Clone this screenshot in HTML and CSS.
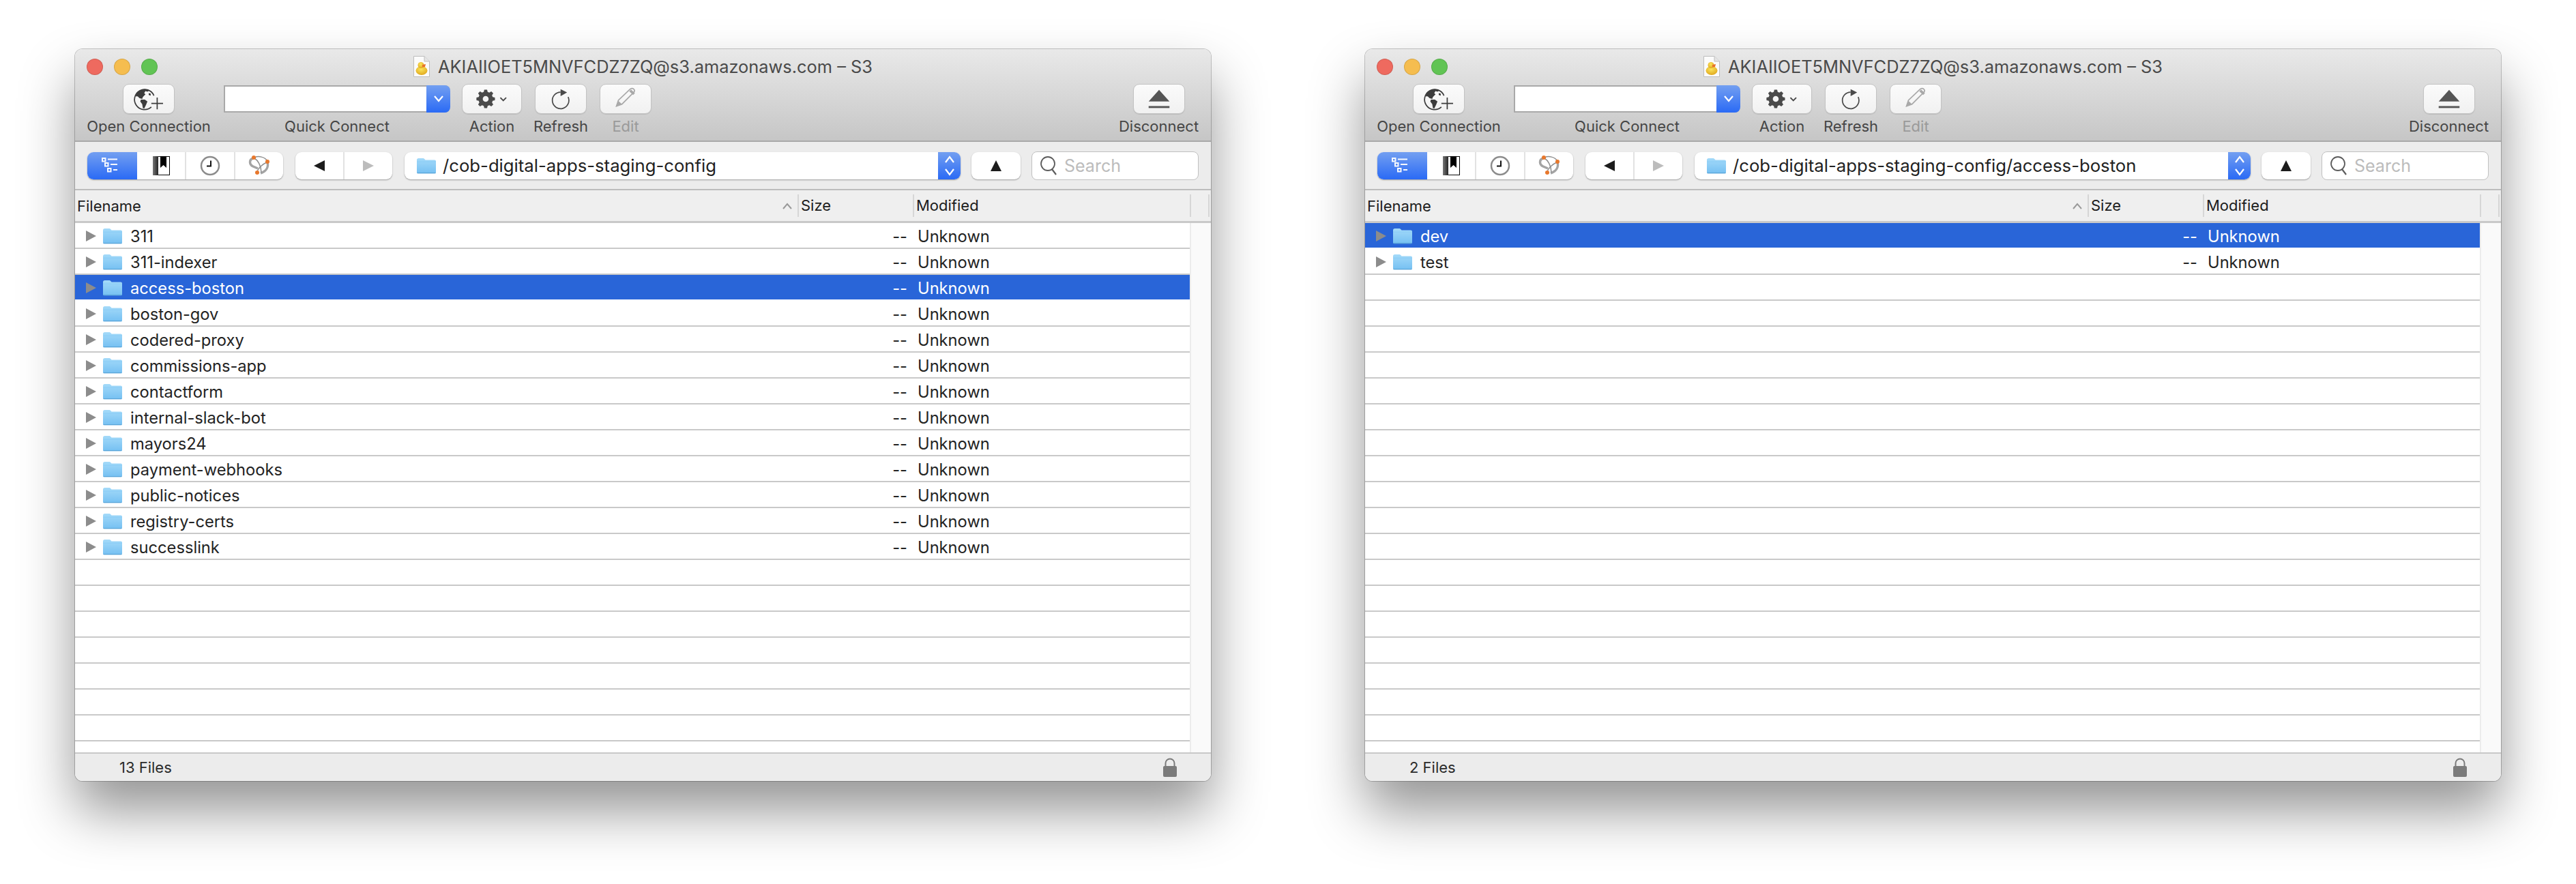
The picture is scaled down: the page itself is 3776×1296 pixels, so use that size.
FILE: index.html
```html
<html>
	<head>
		<meta charset="utf-8">
		<title>Cyberduck S3 browser</title>
		<link rel="stylesheet" href="styles.css">
	</head>
	<body>
		<svg class="sprite">
			<defs>
				<linearGradient id="folderFill" x1="0" y1="0" x2="0" y2="1">
					<stop offset="0" stop-color="#a4daf9"/>
					<stop offset="1" stop-color="#75c0f2"/>
				</linearGradient>
				<linearGradient id="spineFill" x1="0" y1="0" x2="1" y2="0">
					<stop offset="0" stop-color="#777"/>
					<stop offset="0.4" stop-color="#111"/>
					<stop offset="1" stop-color="#000"/>
				</linearGradient>
				<radialGradient id="duckFill" cx="0.45" cy="0.35" r="0.7">
					<stop offset="0" stop-color="#fbe55a"/>
					<stop offset="1" stop-color="#dfa51c"/>
				</radialGradient>
				<symbol id="folder" viewBox="0 0 30 24">
					<path d="M1 3.500C1 2 2 1 3.500 1H10c1 0 1.600.4 2.200 1.100L13.500 3.500H27c1.200 0 2 .8 2 2V21.500c0 1-.8 1.700-1.800 1.700H2.800C1.800 23.200 1 22.500 1 21.500Z" fill="url(#folderFill)"/>
					<path d="M1 6.200H29" stroke="#8ccdf6" stroke-width="1" fill="none"/>
					<path d="M1.500 22.600H28.500" stroke="#5aa5d8" stroke-width="1.200" fill="none"/>
				</symbol>
				<symbol id="globe" viewBox="0 0 76 44">
					<path d="M42 34.500A15.500 15.500 0 1 1 46 17" fill="none" stroke="#3c3c3c" stroke-width="1.800"/>
					<path d="M19 13c3-4 8-6 13-6 3 0 6 1 7 2l-3 2-3-1-2 3 2 2-4 4-1 3-4-1-3-3-3 0Z" fill="#3c3c3c"/>
					<path d="M26 23l6 0 4 3-2 5-3 6-2-1-1-6-3-4Z" fill="#3c3c3c"/>
					<path d="M38 13l3 1 0 3-3-1Z" fill="#3c3c3c"/>
					<path d="M51 20V38M42 29H60" fill="none" stroke="#3c3c3c" stroke-width="1.800"/>
				</symbol>
				<symbol id="gear" viewBox="0 0 88 44">
					<path d="M32 8h5l1 4 3 1.200 3.500-2.200 3.500 3.500-2.200 3.500L47 21l4 1v5l-4 1-1.200 3 2.200 3.500-3.500 3.500-3.500-2.200L38 37l-1 4h-5l-1-4-3-1.200-3.500 2.200-3.500-3.500 2.200-3.500L22 28l-4-1v-5l4-1 1.200-3-2.200-3.500 3.500-3.500 3.500 2.200L31 12Z" transform="translate(34.500 22) scale(.86) translate(-34.500 -24.500)" fill="#4a4a4a"/>
					<circle cx="34.500" cy="22" r="4.500" fill="#f4f4f4"/>
					<path d="M57 20l4.500 4.500L66 20" fill="none" stroke="#4a4a4a" stroke-width="2"/>
				</symbol>
				<symbol id="refresh" viewBox="0 0 76 44">
					<path d="M37.700 11.600A12.700 12.700 0 1 0 49.300 19" fill="none" stroke="#4a4a4a" stroke-width="1.800"/>
					<path d="M37.700 7L47.700 12 37.700 17.700Z" fill="#4a4a4a"/>
				</symbol>
				<symbol id="pencil" viewBox="0 0 76 44">
					<path d="M24 33l3-9 18-17c2-1.500 4-1.500 5.500 0s1.500 3.500 0 5L32.500 30Z" fill="none" stroke="#a9a9a9" stroke-width="1.800"/>
					<path d="M45 9l6 5.500" stroke="#a9a9a9" stroke-width="4" fill="none"/>
					<path d="M23 34l3.500-9.500 6 5.500Z" fill="#a9a9a9"/>
				</symbol>
				<symbol id="eject" viewBox="0 0 76 44">
					<path d="M38 8L54 26H22Z" fill="#555"/>
					<rect x="22" y="33" width="32" height="3" fill="#555"/>
				</symbol>
				<symbol id="outline" viewBox="0 0 73 40">
					<g fill="none" stroke="#fff" stroke-width="2" opacity=".95">
						<rect x="22" y="9" width="4.500" height="4.500"/>
						<rect x="26" y="16" width="4.500" height="4.500"/>
						<rect x="30" y="24" width="4.500" height="4.500"/>
						<path d="M30 10.500H44M34 18H44M38 26H44"/>
					</g>
				</symbol>
				<symbol id="bookmark" viewBox="0 0 25 28">
					<rect width="25" height="28" fill="url(#spineFill)"/>
					<rect x="8" y="1" width="16" height="26" fill="#fff"/>
					<path d="M11 0H20V17L15.500 13 11 17Z" fill="#000"/>
				</symbol>
				<symbol id="clock" viewBox="0 0 30 30">
					<circle cx="15" cy="15" r="13" fill="#fff" stroke="#8c8c8c" stroke-width="2.500"/>
					<path d="M16 7.500V15.500H10" fill="none" stroke="#111" stroke-width="2"/>
				</symbol>
				<symbol id="bonjour" viewBox="0 0 32 32">
					<g fill="none" stroke="#a4a4a4" stroke-width="3.500">
						<path d="M7 5C1 7 1 14 7 17L14 20"/>
						<path d="M28 11C30 18 26 24 18 27"/>
					</g>
					<g fill="none" stroke="#8e8e8e" stroke-width="1.500">
						<path d="M9 4C15 1 24 3 28 9"/>
						<path d="M27 11C20 14 14 20 13 25"/>
						<path d="M9 5C14 8 19 16 19 26"/>
					</g>
					<circle cx="8" cy="4" r="3" fill="#e8782c"/>
					<circle cx="28" cy="10" r="3" fill="#e8782c"/>
					<circle cx="13" cy="26" r="3" fill="#e8782c"/>
				</symbol>
				<symbol id="duckfile" viewBox="0 0 24 31">
					<path d="M.5.500H16L23.500 8V30.500H.5Z" fill="#fbfbfb" stroke="#bdbdbd"/>
					<path d="M16 .5V8H23.500" fill="#e4e4e4" stroke="#bdbdbd"/>
					<ellipse cx="12" cy="21.500" rx="8.500" ry="6.500" fill="url(#duckFill)"/>
					<circle cx="11" cy="13.500" r="4.500" fill="url(#duckFill)"/>
					<path d="M13 13l5-1-1 4-4 .5Z" fill="#e8702a"/>
				</symbol>
				<symbol id="magnifier" viewBox="0 0 26 30">
					<circle cx="12" cy="12" r="10" fill="none" stroke="#5c5c5c" stroke-width="1.800"/>
					<path d="M18 20l6 8" stroke="#5c5c5c" stroke-width="2.200" fill="none"/>
				</symbol>
				<symbol id="lock" viewBox="0 0 20 28">
					<path d="M3.500 13V8a6.500 6.500 0 0 1 13 0V13" fill="none" stroke="#7b7b7b" stroke-width="2"/>
					<rect y="12" width="20" height="16" rx="2" fill="#7b7b7b"/>
				</symbol>
			</defs>
		</svg>

		<div class="window">
			<div class="titlebar">
				<div class="title-row">
					<div class="lights">
						<span class="light red"></span>
						<span class="light yellow"></span>
						<span class="light green"></span>
					</div>
					<div class="title">
						<svg class="title-icon"><use href="#duckfile"/></svg>
						<span>AKIAIIOET5MNVFCDZ7ZQ@s3.amazonaws.com – S3</span>
					</div>
				</div>
				<div class="toolbar">
					<div class="tool tool-open">
						<div class="tool-btn"><svg class="btn-icon"><use href="#globe"/></svg></div>
						<span class="tool-label">Open Connection</span>
					</div>
					<div class="tool tool-quick">
						<div class="quick-box"><span class="quick-arrow"><svg viewBox="0 0 16 12"><path d="M2 2l6 7 6-7" fill="none" stroke="#fff" stroke-width="2.200"/></svg></span></div>
						<span class="tool-label">Quick Connect</span>
					</div>
					<div class="tool tool-action">
						<div class="tool-btn wide"><svg class="btn-icon"><use href="#gear"/></svg></div>
						<span class="tool-label">Action</span>
					</div>
					<div class="tool tool-refresh">
						<div class="tool-btn"><svg class="btn-icon"><use href="#refresh"/></svg></div>
						<span class="tool-label">Refresh</span>
					</div>
					<div class="tool tool-edit">
						<div class="tool-btn"><svg class="btn-icon"><use href="#pencil"/></svg></div>
						<span class="tool-label disabled">Edit</span>
					</div>
					<div class="tool tool-disconnect">
						<div class="tool-btn"><svg class="btn-icon"><use href="#eject"/></svg></div>
						<span class="tool-label">Disconnect</span>
					</div>
				</div>
			</div>
			<div class="navbar">
				<div class="segments">
					<div class="seg seg-on"><svg class="seg-outline"><use href="#outline"/></svg></div>
					<div class="seg"><svg class="seg-bookmark"><use href="#bookmark"/></svg></div>
					<div class="seg"><svg class="seg-clock"><use href="#clock"/></svg></div>
					<div class="seg"><svg class="seg-bonjour"><use href="#bonjour"/></svg></div>
				</div>
				<div class="history">
					<div class="hist"><span class="arrow-left"></span></div>
					<div class="hist"><span class="arrow-right"></span></div>
				</div>
				<div class="path">
					<svg class="path-folder"><use href="#folder"/></svg>
					<span class="path-text">/cob-digital-apps-staging-config</span>
					<span class="path-arrows"><svg viewBox="0 0 16 36"><path d="M2 13l6-8 6 8M2 23l6 8 6-8" fill="none" stroke="#fff" stroke-width="2.200"/></svg></span>
				</div>
				<div class="up-btn"><span class="arrow-up"></span></div>
				<div class="search">
					<svg class="search-icon"><use href="#magnifier"/></svg>
					<span class="search-text">Search</span>
				</div>
			</div>
			<div class="list-header">
				<div class="col-name">Filename<span class="sort-mark"><svg viewBox="0 0 14 10"><path d="M1 9l6-7 6 7" fill="none" stroke="#999" stroke-width="2"/></svg></span></div>
				<div class="col-size">Size</div>
				<div class="col-mod">Modified</div>
				<div class="col-rest"></div>
			</div>
			<div class="list">
				<div class="rows">
					<div class="row"><span class="tri"></span><svg class="row-folder"><use href="#folder"/></svg><span class="row-name">311</span><span class="row-size">--</span><span class="row-mod">Unknown</span></div>
					<div class="row"><span class="tri"></span><svg class="row-folder"><use href="#folder"/></svg><span class="row-name">311-indexer</span><span class="row-size">--</span><span class="row-mod">Unknown</span></div>
					<div class="row selected"><span class="tri"></span><svg class="row-folder"><use href="#folder"/></svg><span class="row-name">access-boston</span><span class="row-size">--</span><span class="row-mod">Unknown</span></div>
					<div class="row"><span class="tri"></span><svg class="row-folder"><use href="#folder"/></svg><span class="row-name">boston-gov</span><span class="row-size">--</span><span class="row-mod">Unknown</span></div>
					<div class="row"><span class="tri"></span><svg class="row-folder"><use href="#folder"/></svg><span class="row-name">codered-proxy</span><span class="row-size">--</span><span class="row-mod">Unknown</span></div>
					<div class="row"><span class="tri"></span><svg class="row-folder"><use href="#folder"/></svg><span class="row-name">commissions-app</span><span class="row-size">--</span><span class="row-mod">Unknown</span></div>
					<div class="row"><span class="tri"></span><svg class="row-folder"><use href="#folder"/></svg><span class="row-name">contactform</span><span class="row-size">--</span><span class="row-mod">Unknown</span></div>
					<div class="row"><span class="tri"></span><svg class="row-folder"><use href="#folder"/></svg><span class="row-name">internal-slack-bot</span><span class="row-size">--</span><span class="row-mod">Unknown</span></div>
					<div class="row"><span class="tri"></span><svg class="row-folder"><use href="#folder"/></svg><span class="row-name">mayors24</span><span class="row-size">--</span><span class="row-mod">Unknown</span></div>
					<div class="row"><span class="tri"></span><svg class="row-folder"><use href="#folder"/></svg><span class="row-name">payment-webhooks</span><span class="row-size">--</span><span class="row-mod">Unknown</span></div>
					<div class="row"><span class="tri"></span><svg class="row-folder"><use href="#folder"/></svg><span class="row-name">public-notices</span><span class="row-size">--</span><span class="row-mod">Unknown</span></div>
					<div class="row"><span class="tri"></span><svg class="row-folder"><use href="#folder"/></svg><span class="row-name">registry-certs</span><span class="row-size">--</span><span class="row-mod">Unknown</span></div>
					<div class="row"><span class="tri"></span><svg class="row-folder"><use href="#folder"/></svg><span class="row-name">successlink</span><span class="row-size">--</span><span class="row-mod">Unknown</span></div>
					<div class="row"></div><div class="row"></div><div class="row"></div><div class="row"></div>
					<div class="row"></div><div class="row"></div><div class="row"></div><div class="row"></div>
				</div>
				<div class="scroll-track"></div>
			</div>
			<div class="statusbar">
				<span class="status-text">13 Files</span>
				<svg class="status-lock"><use href="#lock"/></svg>
			</div>
		</div>

		<div class="window">
			<div class="titlebar">
				<div class="title-row">
					<div class="lights">
						<span class="light red"></span>
						<span class="light yellow"></span>
						<span class="light green"></span>
					</div>
					<div class="title">
						<svg class="title-icon"><use href="#duckfile"/></svg>
						<span>AKIAIIOET5MNVFCDZ7ZQ@s3.amazonaws.com – S3</span>
					</div>
				</div>
				<div class="toolbar">
					<div class="tool tool-open">
						<div class="tool-btn"><svg class="btn-icon"><use href="#globe"/></svg></div>
						<span class="tool-label">Open Connection</span>
					</div>
					<div class="tool tool-quick">
						<div class="quick-box"><span class="quick-arrow"><svg viewBox="0 0 16 12"><path d="M2 2l6 7 6-7" fill="none" stroke="#fff" stroke-width="2.200"/></svg></span></div>
						<span class="tool-label">Quick Connect</span>
					</div>
					<div class="tool tool-action">
						<div class="tool-btn wide"><svg class="btn-icon"><use href="#gear"/></svg></div>
						<span class="tool-label">Action</span>
					</div>
					<div class="tool tool-refresh">
						<div class="tool-btn"><svg class="btn-icon"><use href="#refresh"/></svg></div>
						<span class="tool-label">Refresh</span>
					</div>
					<div class="tool tool-edit">
						<div class="tool-btn"><svg class="btn-icon"><use href="#pencil"/></svg></div>
						<span class="tool-label disabled">Edit</span>
					</div>
					<div class="tool tool-disconnect">
						<div class="tool-btn"><svg class="btn-icon"><use href="#eject"/></svg></div>
						<span class="tool-label">Disconnect</span>
					</div>
				</div>
			</div>
			<div class="navbar">
				<div class="segments">
					<div class="seg seg-on"><svg class="seg-outline"><use href="#outline"/></svg></div>
					<div class="seg"><svg class="seg-bookmark"><use href="#bookmark"/></svg></div>
					<div class="seg"><svg class="seg-clock"><use href="#clock"/></svg></div>
					<div class="seg"><svg class="seg-bonjour"><use href="#bonjour"/></svg></div>
				</div>
				<div class="history">
					<div class="hist"><span class="arrow-left"></span></div>
					<div class="hist"><span class="arrow-right"></span></div>
				</div>
				<div class="path">
					<svg class="path-folder"><use href="#folder"/></svg>
					<span class="path-text">/cob-digital-apps-staging-config/access-boston</span>
					<span class="path-arrows"><svg viewBox="0 0 16 36"><path d="M2 13l6-8 6 8M2 23l6 8 6-8" fill="none" stroke="#fff" stroke-width="2.200"/></svg></span>
				</div>
				<div class="up-btn"><span class="arrow-up"></span></div>
				<div class="search">
					<svg class="search-icon"><use href="#magnifier"/></svg>
					<span class="search-text">Search</span>
				</div>
			</div>
			<div class="list-header">
				<div class="col-name">Filename<span class="sort-mark"><svg viewBox="0 0 14 10"><path d="M1 9l6-7 6 7" fill="none" stroke="#999" stroke-width="2"/></svg></span></div>
				<div class="col-size">Size</div>
				<div class="col-mod">Modified</div>
				<div class="col-rest"></div>
			</div>
			<div class="list">
				<div class="rows">
					<div class="row selected"><span class="tri"></span><svg class="row-folder"><use href="#folder"/></svg><span class="row-name">dev</span><span class="row-size">--</span><span class="row-mod">Unknown</span></div>
					<div class="row"><span class="tri"></span><svg class="row-folder"><use href="#folder"/></svg><span class="row-name">test</span><span class="row-size">--</span><span class="row-mod">Unknown</span></div>
					<div class="row"></div><div class="row"></div><div class="row"></div><div class="row"></div>
					<div class="row"></div><div class="row"></div><div class="row"></div><div class="row"></div>
					<div class="row"></div><div class="row"></div><div class="row"></div><div class="row"></div>
					<div class="row"></div><div class="row"></div><div class="row"></div><div class="row"></div>
					<div class="row"></div><div class="row"></div><div class="row"></div>
				</div>
				<div class="scroll-track"></div>
			</div>
			<div class="statusbar">
				<span class="status-text">2 Files</span>
				<svg class="status-lock"><use href="#lock"/></svg>
			</div>
		</div>
	</body>
</html>
```

FILE: styles.css
```css
html, body {
	height: 100%;
}
body {
	margin: 0;
	padding: 72px 110px 0;
	box-sizing: border-box;
	display: flex;
	justify-content: space-between;
	align-items: flex-start;
	background-color: white;
	font-family: Inter, "Liberation Sans", sans-serif;
	font-size: 22px;
	color: #222;
	overflow: hidden;
}
.sprite {
	position: absolute;
	width: 0px;
	height: 0px;
}
.window {
	width: 1665px;
	height: 1073px;
	display: flex;
	flex-direction: column;
	border-radius: 11px;
	overflow: hidden;
	box-shadow: 0 0 0 1px rgba(0,0,0,0.22), 0 44px 80px rgba(0,0,0,0.42);
}

/* title bar + big toolbar */
.titlebar {
	height: 136px;
	box-sizing: border-box;
	flex: none;
	background: linear-gradient(#e9e9e9, #c6c6c6);
	border-bottom: 2px solid #a9a9a9;
}
.title-row {
	height: 51px;
	display: grid;
	grid-template-columns: 1fr auto 1fr;
	align-items: center;
}
.lights {
	display: flex;
	gap: 16px;
	padding-left: 17px;
}
.light {
	width: 24px;
	height: 24px;
	box-sizing: border-box;
	border-radius: 50%;
	border: 1px solid rgba(0,0,0,0.12);
}
.red { background-color: #ee6a5f; }
.yellow { background-color: #f5bd4f; }
.green { background-color: #61c454; }
.title {
	grid-column: 2;
	display: flex;
	align-items: center;
	gap: 12px;
	font-size: 25.4px;
	color: #4a4a4a;
}
.title-icon {
	width: 24px;
	height: 31px;
}
.toolbar {
	display: flex;
	padding: 0 18px 0 17px;
}
.tool {
	display: flex;
	flex-direction: column;
	align-items: center;
	gap: 4px;
}
.tool-open { width: 182px; }
.tool-quick { width: 332px; margin-left: 19px; }
.tool-action { width: 88px; margin-left: 17px; }
.tool-refresh { width: 80px; margin-left: 17px; }
.tool-edit { width: 76px; margin-left: 17px; }
.tool-disconnect { width: 117px; margin-left: auto; }
.tool-btn {
	width: 76px;
	height: 44px;
	box-sizing: border-box;
	border: 1px solid #c3c3c3;
	border-radius: 9px;
	background: linear-gradient(#fbfbfb, #f1f1f1);
	box-shadow: 0 1px 1px rgba(0,0,0,0.1);
}
.tool-btn.wide {
	width: 88px;
}
.btn-icon {
	display: block;
	width: 100%;
	height: 100%;
}
.tool-label {
	line-height: 28px;
	white-space: nowrap;
	color: #464646;
}
.tool-label.disabled {
	color: #9a9a9a;
}
.quick-box {
	width: 332px;
	height: 40px;
	margin: 2px 0;
	box-sizing: border-box;
	display: flex;
	justify-content: flex-end;
	background-color: white;
	border: 2px solid #a9a9a9;
	border-right: none;
	border-radius: 0 8px 8px 0;
}
.quick-arrow {
	width: 35px;
	margin: -2px 0;
	display: flex;
	align-items: center;
	justify-content: center;
	border-radius: 0 8px 8px 0;
	background: linear-gradient(#739ff1, #2a6af5);
}
.quick-arrow svg {
	width: 16px;
	height: 12px;
}

/* second bar */
.navbar {
	height: 71px;
	box-sizing: border-box;
	flex: none;
	display: flex;
	align-items: center;
	padding: 0 18px;
	background-color: #ececec;
	border-bottom: 2px solid #bdbdbd;
}
.segments {
	width: 287px;
	height: 40px;
	box-sizing: border-box;
	flex: none;
	display: flex;
	overflow: hidden;
	background-color: white;
	border-radius: 9px;
	box-shadow: 0 1px 2px rgba(0,0,0,0.35);
}
.seg {
	flex: 1;
	display: flex;
	align-items: center;
	justify-content: center;
	border-left: 2px solid #e2e2e2;
}
.seg-on {
	flex: none;
	width: 73px;
	border-left: none;
	background: linear-gradient(#739ff1, #2a6af5);
}
.seg-on + .seg {
	border-left: none;
}
.seg-outline {
	width: 73px;
	height: 40px;
}
.seg-bookmark {
	width: 25px;
	height: 28px;
}
.seg-clock {
	width: 30px;
	height: 30px;
}
.seg-bonjour {
	width: 32px;
	height: 32px;
}
.history {
	width: 142px;
	height: 40px;
	flex: none;
	margin-left: 18px;
	display: flex;
	background-color: white;
	border-radius: 9px;
	box-shadow: 0 1px 2px rgba(0,0,0,0.35);
}
.hist {
	flex: 1;
	display: flex;
	align-items: center;
	justify-content: center;
}
.hist + .hist {
	border-left: 2px solid #e2e2e2;
}
.arrow-left {
	width: 0px;
	height: 0px;
	border-style: solid;
	border-width: 8px 16px 8px 0;
	border-color: transparent #1c1c1c transparent transparent;
}
.arrow-right {
	width: 0px;
	height: 0px;
	border-style: solid;
	border-width: 8px 0 8px 16px;
	border-color: transparent transparent transparent #bcbcbc;
}
.path {
	flex: 1;
	height: 40px;
	margin: 0 16px 0 18px;
	display: flex;
	align-items: center;
	background-color: white;
	border-radius: 9px;
	box-shadow: 0 1px 2px rgba(0,0,0,0.35);
	overflow: hidden;
}
.path-folder {
	width: 30px;
	height: 24px;
	flex: none;
	margin-left: 17px;
}
.path-text {
	flex: 1;
	margin-left: 9px;
	font-size: 25.7px;
	color: #222;
}
.path-arrows {
	width: 33px;
	height: 100%;
	display: flex;
	align-items: center;
	justify-content: center;
	background: linear-gradient(#739ff1, #2a6af5);
}
.path-arrows svg {
	width: 16px;
	height: 36px;
}
.up-btn {
	width: 72px;
	height: 40px;
	flex: none;
	display: flex;
	align-items: center;
	justify-content: center;
	background-color: white;
	border-radius: 9px;
	box-shadow: 0 1px 2px rgba(0,0,0,0.35);
}
.arrow-up {
	width: 0px;
	height: 0px;
	border-style: solid;
	border-width: 0 8px 16px 8px;
	border-color: transparent transparent #1c1c1c transparent;
}
.search {
	width: 245px;
	height: 42px;
	box-sizing: border-box;
	flex: none;
	margin-left: 16px;
	display: flex;
	align-items: center;
	padding-left: 11px;
	background-color: white;
	border: 1px solid #c0c0c0;
	border-radius: 8px;
}
.search-icon {
	width: 26px;
	height: 30px;
}
.search-text {
	margin-left: 10px;
	font-size: 25px;
	color: #bcbcbc;
}

/* file list */
.list-header {
	height: 48px;
	box-sizing: border-box;
	flex: none;
	display: flex;
	align-items: center;
	background-color: #efefef;
	border-bottom: 3px solid #c9c9c9;
	font-size: 22px;
	color: #1c1c1c;
}
.col-name {
	width: 1059px;
	box-sizing: border-box;
	display: flex;
	justify-content: space-between;
	align-items: center;
	padding: 0 8px 0 3px;
}
.sort-mark {
	display: flex;
}
.sort-mark svg {
	width: 14px;
	height: 10px;
}
.col-size, .col-mod, .col-rest {
	height: 33px;
	line-height: 33px;
	box-sizing: border-box;
	border-left: 2px solid #d6d6d6;
	padding-left: 3px;
}
.col-size { width: 169px; }
.col-mod { width: 406px; }
.col-rest { width: 29px; border-right: 2px solid #d6d6d6; }
.list {
	flex: 1;
	min-height: 0;
	display: flex;
	background-color: white;
}
.rows {
	width: 1634px;
	overflow: hidden;
}
.scroll-track {
	flex: 1;
	background-color: #fafafa;
	border-left: 2px solid #ececec;
}
.row {
	height: 38px;
	box-sizing: border-box;
	display: flex;
	align-items: center;
	border-bottom: 2px solid #c9c9c9;
	padding-top: 2px;
	font-size: 23.7px;
	color: #232323;
}
.row.selected {
	background-color: #2965d8;
	color: white;
	border-bottom-color: white;
}
.tri {
	width: 0px;
	height: 0px;
	flex: none;
	margin-left: 16px;
	border-style: solid;
	border-width: 8px 0 8px 15px;
	border-color: transparent transparent transparent #8c8c8c;
}
.row-folder {
	width: 30px;
	height: 24px;
	flex: none;
	margin-left: 9px;
}
.row-name {
	width: 1022px;
	flex: none;
	margin-left: 11px;
}
.row-size {
	width: 117px;
	flex: none;
	text-align: right;
}
.row-mod {
	margin-left: 15px;
}
.statusbar {
	height: 42px;
	box-sizing: border-box;
	flex: none;
	display: flex;
	align-items: center;
	justify-content: space-between;
	padding: 0 50px 0 65px;
	background-color: #ececec;
	border-top: 2px solid #c8c8c8;
}
.status-text {
	color: #2b2b2b;
}
.status-lock {
	width: 20px;
	height: 28px;
}
```
